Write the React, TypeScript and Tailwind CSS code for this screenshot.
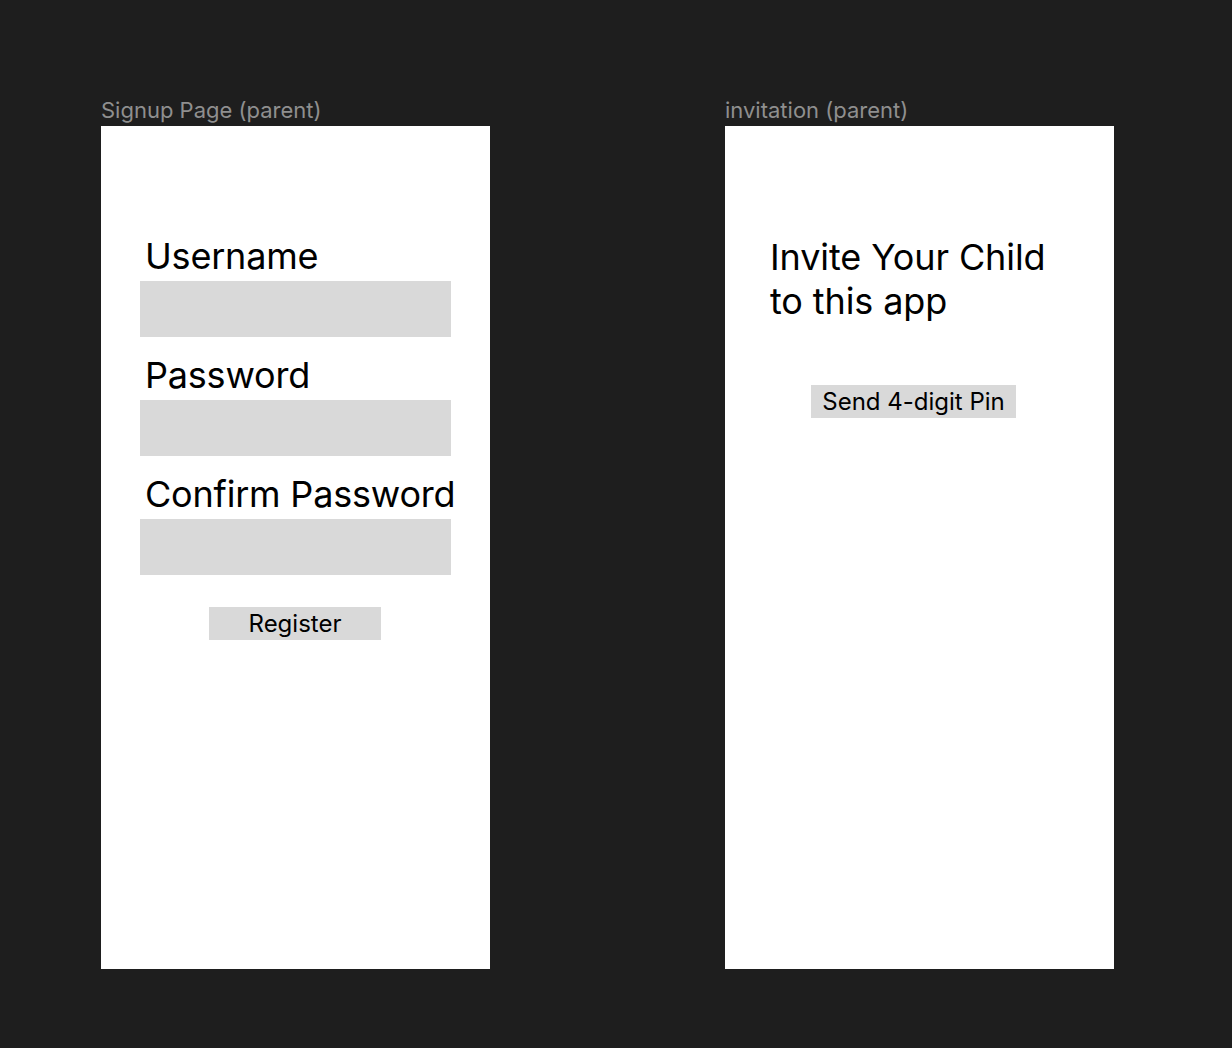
const FIELDS = ["Username", "Password", "Confirm Password"];

function FrameLabel({ children }: { children: string }) {
  return (
    <p className="mb-[4px] text-[22px] leading-[24px] text-[#8f8f8f]">
      {children}
    </p>
  );
}

function SignupFrame() {
  return (
    <div className="flex flex-col">
      <FrameLabel>Signup Page (parent)</FrameLabel>
      <div className="flex h-[843px] w-[389px] flex-col bg-white pl-[39px] pt-[108px] text-black">
        {FIELDS.map((field, index) => (
          <div className={index === 0 ? "" : "mt-[16px]"} key={field}>
            <p className="whitespace-nowrap pl-[5px] text-[36px] leading-[44px] tracking-[-0.2px]">
              {field}
            </p>
            <div className="mt-[3px] h-[56px] w-[311px] bg-[#d9d9d9]" />
          </div>
        ))}
        <button
          className="ml-[69px] mt-[32px] h-[33px] w-[172px] bg-[#d9d9d9] text-[24px] leading-[31px] text-black"
          type="button"
        >
          Register
        </button>
      </div>
    </div>
  );
}

function InvitationFrame() {
  return (
    <div className="flex flex-col">
      <FrameLabel>invitation (parent)</FrameLabel>
      <div className="flex h-[843px] w-[389px] flex-col bg-white pl-[45px] pt-[109px] text-black">
        <p className="w-[300px] text-[36px] leading-[44px] tracking-[-0.1px]">
          Invite Your Child to this app
        </p>
        <button
          className="ml-[41px] mt-[62px] h-[33px] w-[205px] bg-[#d9d9d9] text-[24px] leading-[31px] text-black"
          type="button"
        >
          Send 4-digit Pin
        </button>
      </div>
    </div>
  );
}

export default function App() {
  return (
    <div className="h-[1048px] w-[1232px] overflow-hidden bg-[#1e1e1e] font-['Inter',sans-serif]">
      <div className="flex gap-[235px] pl-[101px] pt-[98px]">
        <SignupFrame />
        <InvitationFrame />
      </div>
    </div>
  );
}
